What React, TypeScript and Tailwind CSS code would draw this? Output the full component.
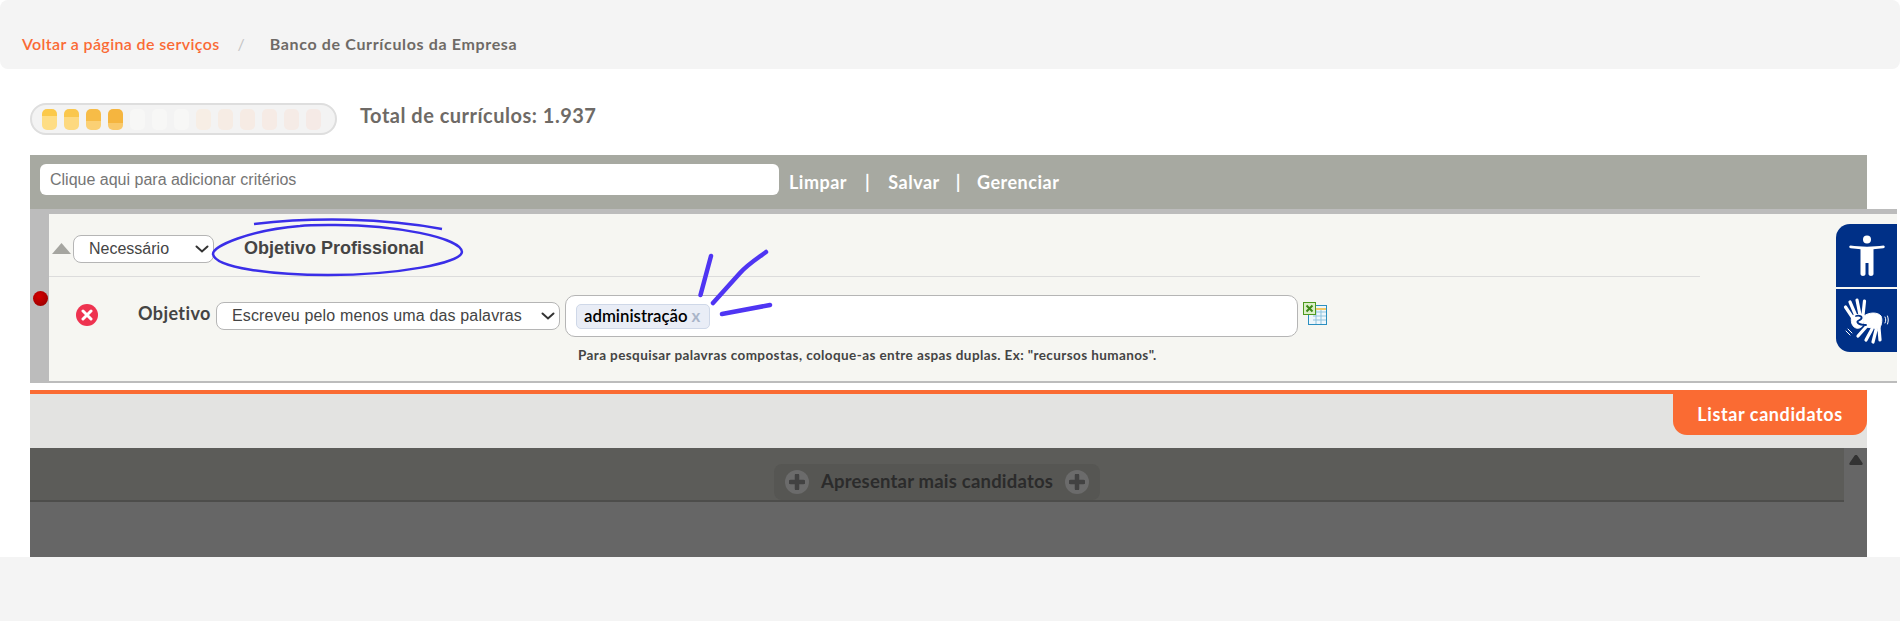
const segments = [
  'bg-[linear-gradient(#fbc94a_0_35%,#fedd85_35%)]',
  'bg-[linear-gradient(#fac74c_0_40%,#fdd97f_40%)]',
  'bg-[linear-gradient(#f7bc47_0_55%,#fbd074_55%)]',
  'bg-[linear-gradient(#f5b53f_0_65%,#f9c96b_65%)]',
  'bg-[#f7f7f6]',
  'bg-[#f7f7f6]',
  'bg-[#f7f7f6]',
  'bg-[#f7eee5]',
  'bg-[#f6ece4]',
  'bg-[#f6ebe4]',
  'bg-[#f6ebe5]',
  'bg-[#f5ebe6]',
  'bg-[#f5eae6]',
];

function PlusBadge() {
  return (
    <span className="relative flex h-[24px] w-[24px] items-center justify-center rounded-full bg-[#6b6b6b]">
      <svg width="16" height="16" viewBox="0 0 16 16">
        <path d="M8 1.500v13M1.500 8h13" stroke="#424242" strokeWidth="4.500" strokeLinecap="round" />
      </svg>
    </span>
  );
}

function Chevron() {
  return (
    <svg width="14" height="8" viewBox="0 0 14 8" className="pointer-events-none absolute top-[10px] right-[5px]">
      <path d="M1.500 1.500L7 6.500l5.500-5" fill="none" stroke="#333" strokeWidth="2" strokeLinecap="round" />
    </svg>
  );
}

function ExcelIcon() {
  return (
    <svg width="24" height="23" viewBox="0 0 24 23" className="mt-[7px] ml-[5px] shrink-0">
      <rect x="5.500" y="3.500" width="18" height="19" fill="#eef6fb" stroke="#2b8fc0" />
      <path d="M6 7h17" stroke="#f2c866" strokeWidth="2" />
      <path d="M10 10h13M10 14h13M10 18h13M13 8v14M18 8v14" stroke="#8fc3de" />
      <rect x="0.500" y="0.500" width="12" height="12" fill="#dcefc8" stroke="#4f9a1e" />
      <path d="M3.500 3.500l6 6M9.500 3.500l-6 6" stroke="#3f8a18" strokeWidth="2" />
    </svg>
  );
}

function PersonIcon() {
  return (
    <svg width="36" height="42" viewBox="0 0 36 42" fill="#fff">
      <circle cx="18" cy="4.500" r="4" />
      <path d="M1.500 10.500c-1.800.3-1.600 2.600.2 2.700 3.600.4 7 .8 9.800 1V39c0 2.600 5 2.600 5 0V28h3v11c0 2.600 5 2.600 5 0V14.200c2.800-.2 6.200-.6 9.800-1 1.800-.1 2-2.400.2-2.700-5 .7-10.500 1.200-16.500 1.200s-11.500-.5-16.500-1.200z" />
    </svg>
  );
}

function SignLanguageIcon() {
  return (
    <svg width="47" height="46" viewBox="0 0 47 46" fill="none" stroke="#fff" strokeLinecap="round">
      <g strokeWidth="3.200">
        <path d="M2.500 9l8 12M7 4l6 14M14 2l3 15M21.500 3l-1.500 14" />
        <path d="M15 38l8-9M23 42l6-11M30 44l3-12M37 42l-1-12" />
      </g>
      <path d="M9 18c3-2 9-2 11 0 2 3 0 7 0 9-3 5-9 4-11-1-1-3-1-6 0-8z" fill="#fff" strokeWidth="1" />
      <path d="M21 18c5-4 14-4 17 0 2 4 0 11-2 13l-13-2c-2-3-3-8-2-11z" fill="#fff" strokeWidth="1" />
      <path d="M13 18c4-1 7 1 5 3-2 2-5 2-3 4 2 2 5 2 8 2" stroke="#003087" strokeWidth="1.800" />
      <path d="M42 19c1 2 1 4 0 6M44.500 18c1 3 1 5 0 8M5 31l4 4M3 33l4 4" strokeWidth="1" />
    </svg>
  );
}

export default function App() {
  return (
    <div className="relative h-[621px] w-[1900px] overflow-hidden bg-white font-['Lato',sans-serif]">
      <div className="flex h-[69px] items-end rounded-lg bg-[#f4f4f4] pb-[13px] pl-[22px] text-[16px] font-semibold">
        <span className="tracking-[0.37px] text-[#fa6a35]">Voltar a página de serviços</span>
        <span className="mr-[25px] ml-[18px] font-normal text-[#c4c4c4]">/</span>
        <span className="font-bold tracking-[0.65px] text-[#6e6a66]">Banco de Currículos da Empresa</span>
      </div>

      <div className="h-[488px] pt-[34px] pr-[33px] pl-[30px]">
        <div className="mb-[20px] flex h-[32px] items-center">
          <div className="flex h-[32px] w-[307px] items-center gap-[7px] rounded-full border-2 border-[#dedede] bg-[#f3f3f3] pl-[10px]">
            {segments.map((seg, i) => (
              <span key={i} className={`h-[21px] w-[15px] rounded-[5px] ${seg}`} />
            ))}
          </div>
          <span className="ml-[23px] pb-[8px] text-[20px] font-bold tracking-[0.5px] text-[#6e6a66]">Total de currículos: 1.937</span>
        </div>

        <div className="flex h-[54px] items-center bg-[#a7a9a1] pl-[10px] text-[18px] font-bold tracking-[0.5px] text-white">
          <input
            placeholder="Clique aqui para adicionar critérios"
            className="mb-[5px] h-[31px] w-[739px] rounded-md bg-white px-[10px] font-['Liberation_Sans',sans-serif] text-[16px] font-normal tracking-normal text-[#444] placeholder:text-[#757575]"
          />
          <span className="ml-[10px]">Limpar</span>
          <span className="mr-[18px] ml-[18px]">|</span>
          <span>Salvar</span>
          <span className="mr-[18px] ml-[16px]">|</span>
          <span className="-ml-[2px]">Gerenciar</span>
        </div>

        <div className="relative -mr-[30px] flex h-[174px] border-t-[5px] border-b-2 border-[#bcbcbc] bg-[#f6f6f2]">
          <div className="relative w-[19px] bg-[#bcbcbc]">
            <span className="absolute top-[77px] left-[3px] h-[15px] w-[15px] rounded-full bg-[radial-gradient(circle_at_40%_35%,#d40000,#8f0000)]" />
          </div>
          <div className="flex-1">
            <div className="flex h-[63px] w-[1651px] items-center border-b border-[#dcdcdc] pt-[7px] pl-[3px]">
              <svg width="19" height="11" viewBox="0 0 19 11" className="shrink-0">
                <path d="M9.500 0L19 11H0z" fill="#a5a5a0" />
              </svg>
              <div className="relative ml-[2px]">
                <select className="h-[28px] w-[141px] appearance-none rounded-lg border border-[#b5b5b5] bg-white pl-[15px] font-['Liberation_Sans',sans-serif] text-[16px] text-[#444]">
                  <option>Necessário</option>
                </select>
                <Chevron />
              </div>
              <span className="ml-[30px] font-['Liberation_Sans',sans-serif] text-[18px] font-bold text-[#444]">Objetivo Profissional</span>
            </div>
            <div className="flex pt-[18px]">
              <span className="mt-[9px] ml-[27px] flex h-[22px] w-[22px] items-center justify-center rounded-full bg-[#ee3350]">
                <svg width="12" height="12" viewBox="0 0 12 12">
                  <path d="M2 2l8 8M10 2l-8 8" stroke="#fff" strokeWidth="3" strokeLinecap="round" />
                </svg>
              </span>
              <span className="mt-[5px] ml-[40px] w-[78px] text-[18px] font-bold tracking-[0.4px] text-[#444]">Objetivo</span>
              <div className="relative mt-[7px] h-[28px]">
                <select className="h-[28px] w-[344px] appearance-none rounded-lg border border-[#b5b5b5] bg-white pl-[15px] font-['Liberation_Sans',sans-serif] text-[16px] tracking-[0.15px] text-[#444]">
                  <option>Escreveu pelo menos uma das palavras</option>
                </select>
                <Chevron />
              </div>
              <div className="ml-[5px]">
                <div className="flex h-[42px] w-[733px] items-center rounded-[10px] border border-[#b5b5b5] bg-white pl-[10px]">
                  <span className="flex h-[25px] w-[134px] items-center gap-[4px] rounded-[5px] border border-[#cfd8e8] bg-[#e9edf6] pl-[7px] text-[16.800px] font-semibold text-black">
                    administração
                    <span className="font-bold text-[#a9b5c9]">x</span>
                  </span>
                </div>
                <p className="mt-[8px] ml-[13px] text-[13.500px] font-bold tracking-[0.4px] text-[#444]">
                  Para pesquisar palavras compostas, coloque-as entre aspas duplas. Ex: "recursos humanos".
                </p>
              </div>
              <ExcelIcon />
            </div>
          </div>

          <div className="absolute top-[10px] right-0 flex w-[61px] flex-col gap-[2px]">
            <div className="flex h-[63px] items-center justify-center rounded-tl-[14px] bg-[#003087]">
              <PersonIcon />
            </div>
            <div className="flex h-[63px] items-center justify-center rounded-bl-[14px] bg-[#003087]">
              <SignLanguageIcon />
            </div>
          </div>
        </div>

        <div className="mt-[7px] flex h-[58px] justify-end border-t-4 border-[#fa6b33] bg-[#e3e3e1]">
          <button className="h-[41px] w-[194px] rounded-b-[14px] bg-[#fa6b33] text-[18px] font-bold tracking-[0.6px] text-white">Listar candidatos</button>
        </div>

        <div className="flex h-[109px] bg-[#666]">
          <div className="flex-1">
            <div className="flex h-[54px] justify-center border-b-2 border-[#4d4d4b] bg-[#5c5c59] pt-[16px]">
              <div className="flex h-[36px] w-[326px] items-center justify-between rounded-lg bg-[#565653] px-[11px] text-[18.500px] font-bold tracking-[0.2px] text-[#2b2b2b]">
                <PlusBadge />
                <span>Apresentar mais candidatos</span>
                <PlusBadge />
              </div>
            </div>
          </div>
          <div className="flex w-[23px] justify-center pt-[7px]">
            <svg width="14" height="10" viewBox="0 0 14 10">
              <path d="M7 0c1 0 1.500.5 2 1.500L13.500 8c.5 1 0 2-1 2h-11c-1 0-1.500-1-1-2L5 1.500C5.500.5 6 0 7 0z" fill="#333" />
            </svg>
          </div>
        </div>
      </div>

      <div className="h-[64px] bg-[#f4f4f4]" />

      {/* marcações feitas à mão por cima da tela */}
      <svg className="pointer-events-none absolute top-0 left-0" width="1900" height="621" fill="none" stroke="#3a2ee8">
        <path d="M254 224c60-7 130-6 188 5" strokeWidth="2.500" />
        <path d="M300 226c-50 4-87 20-87 28 2 14 60 21 115 21 70 0 133-12 134-23 0-14-68-28-134-27-10 0-20 0-28 1" strokeWidth="2.500" />
        <g stroke="#4f35f3" strokeWidth="4.500" strokeLinecap="round">
          <path d="M711 256l-10.500 39" />
          <path d="M766 252C755 260 747 265 740 273C730 284 722 293 713 303" />
          <path d="M722 314l48-9" />
        </g>
      </svg>
    </div>
  );
}
